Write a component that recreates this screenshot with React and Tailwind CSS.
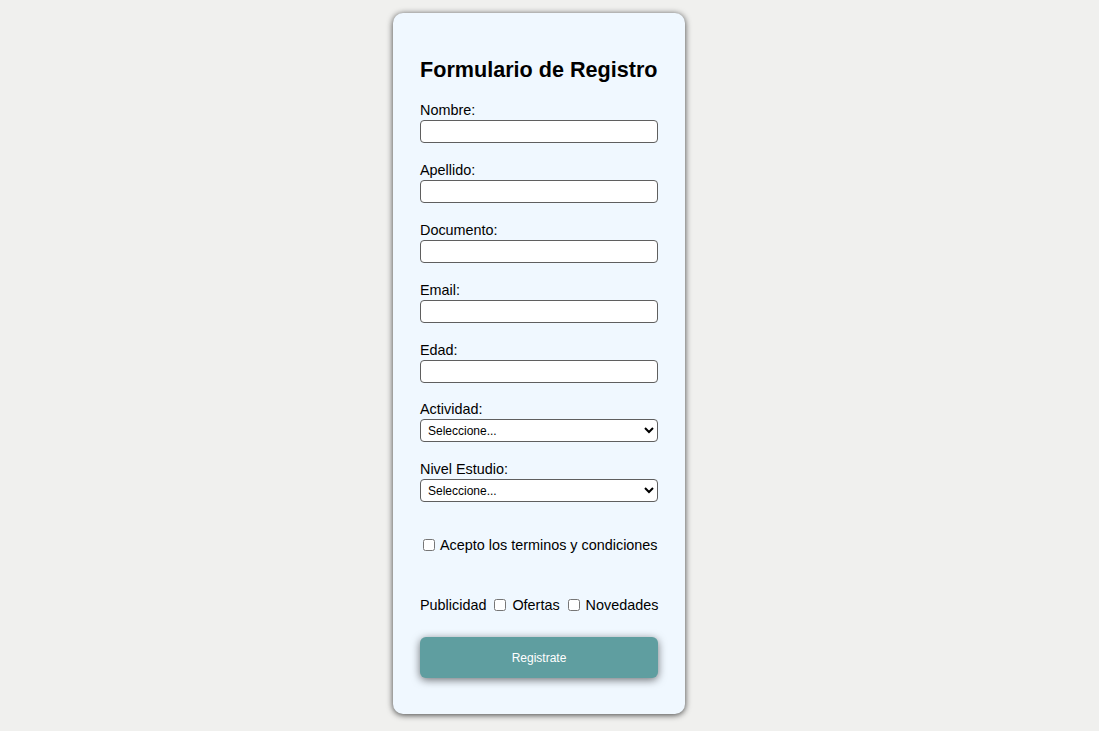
const CAMPOS = [
  { id: 'nombre', label: 'Nombre:' },
  { id: 'apellido', label: 'Apellido:' },
  { id: 'documento', label: 'Documento:' },
  { id: 'email', label: 'Email:' },
  { id: 'edad', label: 'Edad:' },
];

const SELECTS = [
  { id: 'actividad', label: 'Actividad:' },
  { id: 'estudio', label: 'Nivel Estudio:' },
];

function Checkbox({ id, className = 'ml-[4px] mr-[2px]' }) {
  return (
    <input
      id={id}
      type="checkbox"
      className={`w-[12px] h-[12px] align-[-1px] appearance-auto ${className}`}
    />
  );
}

export default function App() {
  return (
    <div
      className="min-h-[731px] bg-[#f0f0ee] flex justify-center items-start pt-[13px] pr-[21px] text-black"
      style={{ fontFamily: '"Liberation Sans", Arial, Helvetica, sans-serif' }}
    >
      <form className="w-[292px] bg-[#f0f8ff] rounded-[10px] shadow-[0_1px_6px_rgba(0,0,0,0.75)] px-[27px] pt-[44px] pb-[36px] flex flex-col">
        <h2 className="text-[21.6px] leading-[25px] font-bold">Formulario de Registro</h2>

        <div className="flex flex-col mt-[20px]">
          {CAMPOS.map((c, i) => (
            <div key={c.id} className={i > 0 ? 'mt-[19px]' : ''}>
              <label htmlFor={c.id} className="block text-[14.4px] leading-[17px]">{c.label}</label>
              <input
                id={c.id}
                type="text"
                className="block w-full h-[23px] mt-[1px] bg-white border border-[#5f5f5f] rounded-[4px] px-1 text-[13px]"
              />
            </div>
          ))}

          {SELECTS.map((s, i) => (
            <div key={s.id} className={i === 0 ? 'mt-[18px]' : 'mt-[19px]'}>
              <label htmlFor={s.id} className="block text-[14.4px] leading-[17px]">{s.label}</label>
              <select
                id={s.id}
                defaultValue=""
                className="block w-full h-[23px] mt-[1px] bg-white border border-[#5f5f5f] rounded-[4px] pl-[3px] text-[12px] appearance-auto"
              >
                <option value="">Seleccione...</option>
              </select>
            </div>
          ))}
        </div>

        {/* terminos */}
        <div className="mt-[33px] h-[20px] flex items-center text-[14.4px] leading-[17px]">
          <span className="whitespace-nowrap">
            <Checkbox id="terminos" className="ml-[3px] mr-[5px]" />
            <label htmlFor="terminos">Acepto los terminos y condiciones</label>
          </span>
        </div>

        {/* intereses */}
        <div className="mt-[40px] h-[20px] flex items-center text-[14.4px] leading-[17px] whitespace-nowrap">
          <span>
            Publicidad <Checkbox id="ofertas" /> <label htmlFor="ofertas">Ofertas</label>{' '}
            <Checkbox id="novedades" /> <label htmlFor="novedades">Novedades</label>
          </span>
        </div>

        <button
          type="button"
          className="mt-[22px] h-[41px] w-full bg-[#5f9ea0] text-white text-[12px] rounded-[6px] shadow-[0_2px_8px_rgba(0,0,0,0.55)]"
        >
          Registrate
        </button>
      </form>
    </div>
  );
}
